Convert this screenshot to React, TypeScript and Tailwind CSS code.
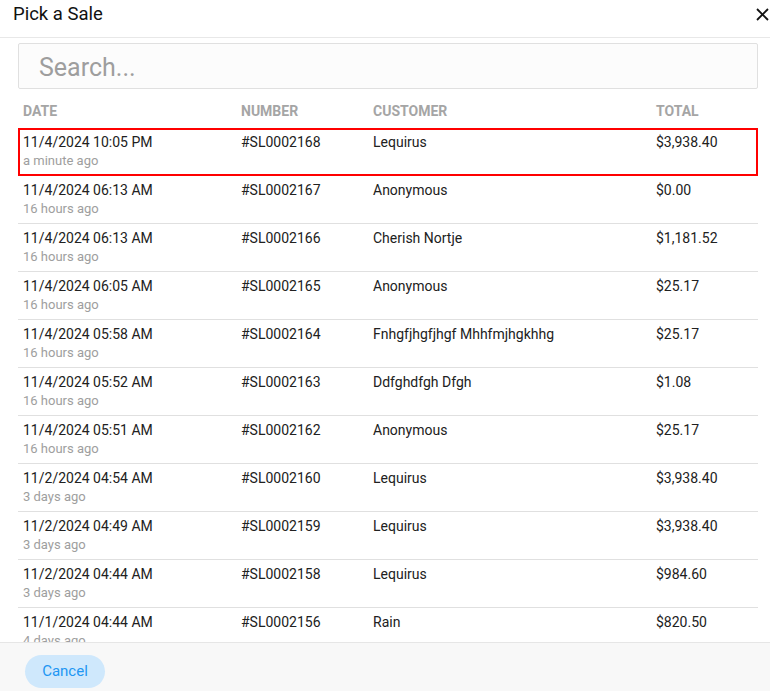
import React, { useState } from 'react';

interface Sale {
  date: string;
  ago: string;
  number: string;
  customer: string;
  total: string;
}

const sales: Sale[] = [
  { date: '11/4/2024 10:05 PM', ago: 'a minute ago', number: '#SL0002168', customer: 'Lequirus', total: '$3,938.40' },
  { date: '11/4/2024 06:13 AM', ago: '16 hours ago', number: '#SL0002167', customer: 'Anonymous', total: '$0.00' },
  { date: '11/4/2024 06:13 AM', ago: '16 hours ago', number: '#SL0002166', customer: 'Cherish Nortje', total: '$1,181.52' },
  { date: '11/4/2024 06:05 AM', ago: '16 hours ago', number: '#SL0002165', customer: 'Anonymous', total: '$25.17' },
  { date: '11/4/2024 05:58 AM', ago: '16 hours ago', number: '#SL0002164', customer: 'Fnhgfjhgfjhgf Mhhfmjhgkhhg', total: '$25.17' },
  { date: '11/4/2024 05:52 AM', ago: '16 hours ago', number: '#SL0002163', customer: 'Ddfghdfgh Dfgh', total: '$1.08' },
  { date: '11/4/2024 05:51 AM', ago: '16 hours ago', number: '#SL0002162', customer: 'Anonymous', total: '$25.17' },
  { date: '11/2/2024 04:54 AM', ago: '3 days ago', number: '#SL0002160', customer: 'Lequirus', total: '$3,938.40' },
  { date: '11/2/2024 04:49 AM', ago: '3 days ago', number: '#SL0002159', customer: 'Lequirus', total: '$3,938.40' },
  { date: '11/2/2024 04:44 AM', ago: '3 days ago', number: '#SL0002158', customer: 'Lequirus', total: '$984.60' },
  { date: '11/1/2024 04:44 AM', ago: '4 days ago', number: '#SL0002156', customer: 'Rain', total: '$820.50' },
];

const cols = 'grid grid-cols-[218px_132px_283px_107px]';

export default function App() {
  const [selected, setSelected] = useState(0);

  return (
    <div className="h-[691px] w-[770px] flex flex-col bg-white overflow-hidden font-['Roboto',sans-serif] text-[#212121]">
      {/* header */}
      <div className="h-[38px] shrink-0 flex items-start justify-between border-b border-[#e8e8e8]">
        <h2 className="pl-[13px] pt-[3px] text-[18.5px] leading-[22px] font-normal text-[#111]">Pick a Sale</h2>
        <button className="mt-[7px] mr-[1px] w-[14px] h-[14px] flex items-center justify-center">
          <svg width="13" height="13" viewBox="0 0 13 13" fill="none" stroke="#111" strokeWidth="1.8">
            <line x1="1" y1="1" x2="12" y2="12" />
            <line x1="12" y1="1" x2="1" y2="12" />
          </svg>
        </button>
      </div>

      {/* body */}
      <div className="flex-1 min-h-0 overflow-hidden px-[18px] pt-[5px]">
        <input
          placeholder="Search..."
          className="block w-[740px] h-[46px] border border-[#e0e0e0] rounded-[2px] bg-[#fcfcfc] pl-[20px] pt-[2px] text-[25px] outline-none placeholder:text-[#9e9e9e]"
        />

        <div className={`${cols} pt-[13px] pb-[7px] text-[14px] leading-[19px] font-bold text-[#a5a5a5] uppercase`}>
          <div className="pl-[5px]">Date</div>
          <div className="pl-[5px]">Number</div>
          <div className="pl-[5px]">Customer</div>
          <div className="pl-[5px]">Total</div>
        </div>

        <div className="w-[740px]">
          {sales.map((s, i) => (
            <div
              key={s.number}
              onClick={() => setSelected(i)}
              className={`${cols} h-[48px] cursor-pointer text-[14px] leading-[18px] ${
                i === selected
                  ? 'outline-2 outline-[#ff0000] -outline-offset-2'
                  : 'border-b border-[#e0e0e0]'
              }`}
            >
              <div className="pl-[5px] pt-[5px]">
                <div>{s.date}</div>
                <div className="text-[13px] leading-[19px] text-[#9e9e9e]">{s.ago}</div>
              </div>
              <div className="pl-[5px] pt-[5px]">{s.number}</div>
              <div className="pl-[5px] pt-[5px]">{s.customer}</div>
              <div className="pl-[5px] pt-[5px]">{s.total}</div>
            </div>
          ))}
        </div>
      </div>

      {/* footer */}
      <div className="h-[49px] shrink-0 border-t border-[#e6e6e6] bg-[#f8f8f8] pl-[25px] pt-[12px]">
        <button className="w-[80px] h-[33px] rounded-full bg-[#cfe8fc] text-[#2196f3] text-[15px]">Cancel</button>
      </div>
    </div>
  );
}
